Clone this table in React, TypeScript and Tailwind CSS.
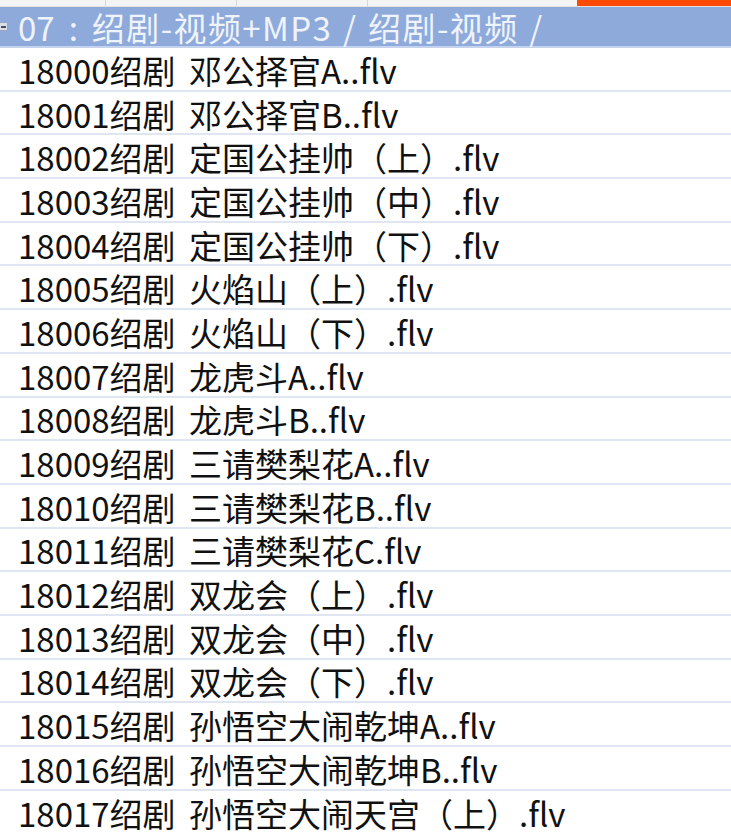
const files = [
  "18000绍剧 邓公择官A..flv",
  "18001绍剧 邓公择官B..flv",
  "18002绍剧 定国公挂帅（上）.flv",
  "18003绍剧 定国公挂帅（中）.flv",
  "18004绍剧 定国公挂帅（下）.flv",
  "18005绍剧 火焰山（上）.flv",
  "18006绍剧 火焰山（下）.flv",
  "18007绍剧 龙虎斗A..flv",
  "18008绍剧 龙虎斗B..flv",
  "18009绍剧 三请樊梨花A..flv",
  "18010绍剧 三请樊梨花B..flv",
  "18011绍剧 三请樊梨花C.flv",
  "18012绍剧 双龙会（上）.flv",
  "18013绍剧 双龙会（中）.flv",
  "18014绍剧 双龙会（下）.flv",
  "18015绍剧 孙悟空大闹乾坤A..flv",
  "18016绍剧 孙悟空大闹乾坤B..flv",
  "18017绍剧 孙悟空大闹天宫（上）.flv",
];

export default function App() {
  return (
    <div className="w-[731px] h-[832px] overflow-hidden bg-white [font-family:'Noto_Sans_CJK_SC',sans-serif]">
      {/* column strip */}
      <div className="flex h-[7px] bg-[#f4f4f4] border-b border-[#e2e2e2]">
        <div className="w-[106px] border-r border-[#d6d6d6]" />
        <div className="w-[131px] border-r border-[#d6d6d6]" />
        <div className="w-[131px] border-r border-[#d6d6d6]" />
        <div className="w-[209px]" />
        <div className="flex-1 bg-[#ff4a00]" />
      </div>

      {/* group header */}
      <div className="flex items-center h-[41px] bg-[#8eaadb] border-b-2 border-[#c6d3ec] text-[#eef3fc] whitespace-nowrap">
        <div className="flex items-center justify-center w-[8px] h-[9px] bg-[#d9dfea] border border-[#9aa6bb] border-l-0">
          <div className="w-[5px] h-[2px] bg-[#4a4f5a]" />
        </div>
        <span className="ml-[10px] text-[33px] leading-none pt-[2px]">07</span>
        <span className="mx-[14px] text-[33px] leading-none pt-[2px]">:</span>
        <span className="text-[33px] leading-none pt-[2px] tracking-[1.4px] [word-spacing:2px]">
          绍剧-视频+MP3 / 绍剧-视频 /
        </span>
      </div>

      {/* rows */}
      {files.map((f) => (
        <div
          key={f}
          className="flex items-center h-[43.7px] pl-[18px] pt-[3px] border-b-2 border-[#e0e6f1] text-[33px] leading-none text-[#111111] whitespace-nowrap [word-spacing:6px]"
        >
          {f}
        </div>
      ))}
    </div>
  );
}
